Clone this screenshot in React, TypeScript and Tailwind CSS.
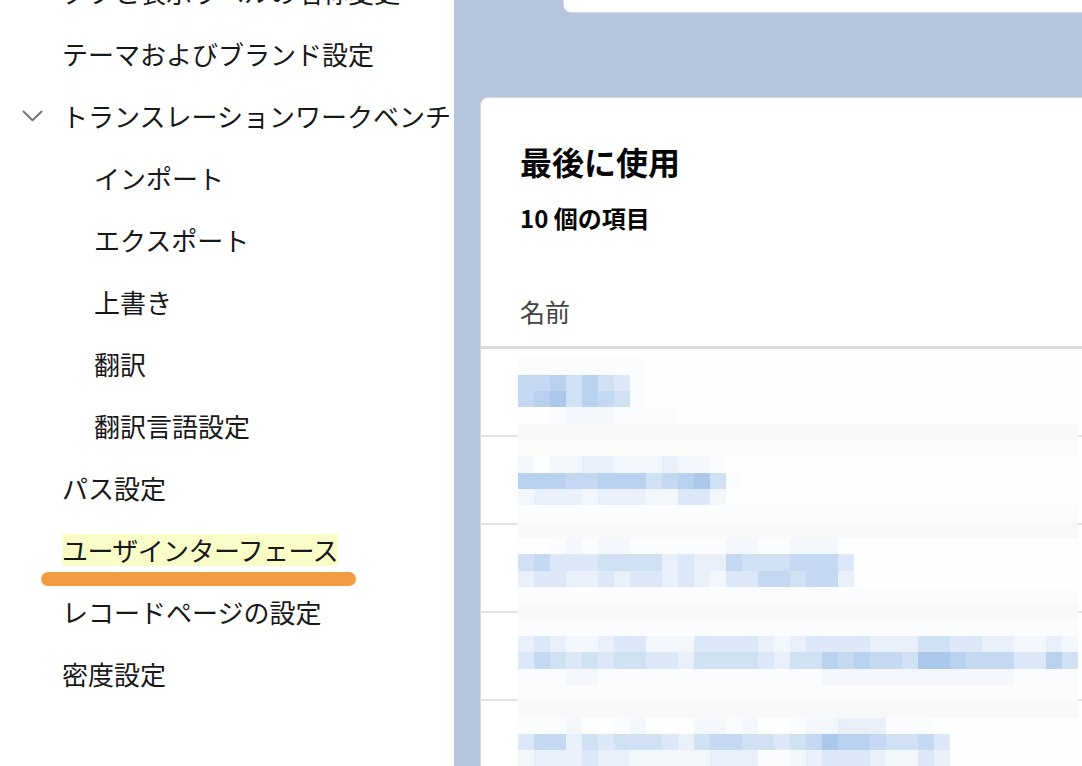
import React from 'react';

const navItems: { label: string; level: 0 | 1; expanded?: boolean; active?: boolean }[] = [
  { label: 'タブと表示ラベルの名称変更', level: 0 },
  { label: 'テーマおよびブランド設定', level: 0 },
  { label: 'トランスレーションワークベンチ', level: 0, expanded: true },
  { label: 'インポート', level: 1 },
  { label: 'エクスポート', level: 1 },
  { label: '上書き', level: 1 },
  { label: '翻訳', level: 1 },
  { label: '翻訳言語設定', level: 1 },
  { label: 'パス設定', level: 0 },
  { label: 'ユーザインターフェース', level: 0, active: true },
  { label: 'レコードページの設定', level: 0 },
  { label: '密度設定', level: 0 },
];

// pixelated (redacted) list of recent items, one string per 16px mosaic row
const mosaic = [
  'wwwwwwww...........................',
  'nnbmbmlw...........................',
  'nbdmbnmw...........................',
  '..wfffwwww.........................',
  'ggggggggggggggggggggggggggggggggggg',
  'ccccccccccccccccccccccccccccccccccc',
  'f.ffeefffeffw......................',
  'bbbnnbbbmnbdmw.....................',
  'feeefeeeffllf......................',
  'wwwwwwwwwwwwwwwwwwwwwwwwwwwwwwwwwww',
  'ggggggggggggggggggggggggggggggggggg',
  '..wfwffwwwwwwffwwfff...............',
  'mnlllmmmmeleenmmmnnnl..............',
  'elleelellelefllnnmnne..............',
  'wwwwwwwwwwwwwwwwwwwwwwwwwwwwwwwwwww',
  'ggggggggggggggggggggggggggggggggggg',
  'wwwwwwwwwwwwwwwwwwwwwwwwwwwwwwwwwww',
  'eleffellfffllllefelllleeemmlleeffef',
  'lnmlmlmmllemmmmlemmbnbnnmddbnnnllbm',
  'wwwffwwwwwwwwwwwwwwffffffffffffwwww',
  'ccccccccccccccccccccccccccccccccccc',
  'ggggggggggggggggggggggggggggggggggg',
  'wwwf..wf...ffwf..wffeeewww.........',
  'lnnemlmmmlemnnmmlmndbbnmmnl........',
  'feeeleefffffeeewwfellleffle........',
];

const cellColor: Record<string, string> = {
  '.': 'bg-[#fefefe]',
  w: 'bg-[#fbfcfe]',
  g: 'bg-[#f8f8f8]',
  c: 'bg-[#fbfbf9]',
  f: 'bg-[#f3f7fc]',
  e: 'bg-[#e9f0fa]',
  l: 'bg-[#dce8f7]',
  m: 'bg-[#d0e1f4]',
  n: 'bg-[#c4d9f1]',
  b: 'bg-[#b8d1ee]',
  d: 'bg-[#a9c8ec]',
};

const ChevronDown = () => (
  <svg width="21" height="12" viewBox="0 0 21 12" fill="none">
    <path d="M1.5 1.5 L10.5 10.2 L19.5 1.5" stroke="#747474" strokeWidth="2" strokeLinecap="round" strokeLinejoin="round" />
  </svg>
);

const Sidebar = () => (
  <div className="w-[454px] shrink-0 bg-white -mt-[39px]">
    {navItems.map((item, i) => (
      <div key={i} className="relative h-[62px] flex items-center">
        {item.expanded ? (
          <div className="flex items-center pl-[22px]">
            <ChevronDown />
            <span className="ml-[19px] text-[26px] leading-[32px] text-[#181818] whitespace-nowrap">{item.label}</span>
          </div>
        ) : (
          <div className={item.level === 1 ? 'pl-[94px]' : 'pl-[62px]'}>
            <span
              className={`text-[26px] leading-[32px] text-[#181818] whitespace-nowrap ${item.active ? 'bg-[#fafcc8] inline-block tracking-[-0.6px]' : ''}`}
            >
              {item.label}
            </span>
          </div>
        )}
        {item.active && (
          <div className="absolute left-[41px] top-[53px] h-[14px] w-[315px] rounded-full bg-[#f29c42] z-10" />
        )}
      </div>
    ))}
  </div>
);

const RecentCard = () => (
  <div className="mt-[84px] ml-[26px] -mr-[20px] bg-white border border-[#d9d9d9] rounded-tl-lg">
    <div className="pt-[43px] pl-[39px]">
      <h1 className="text-[32px] leading-[40px] font-bold text-[#080707]">最後に使用</h1>
      <p className="mt-[21px] text-[24px] leading-[32px] font-bold text-[#080707]">10 個の項目</p>
    </div>
    <div className="mt-[61px] pl-[39px] pb-[19px] border-b-[3px] border-[#dddbda]">
      <span className="text-[25px] leading-[32px] text-[#444444]">名前</span>
    </div>
    <div className="relative">
      {[0, 1, 2, 3, 4].map((r) => (
        <div key={r} className="h-[88px] border-b-[2px] border-[#e3e3e3]" />
      ))}
      <div className="absolute left-[37px] top-[9.4px] w-[560px]">
        {mosaic.map((row, r) => (
          <div key={r} className="flex h-[16.33px]">
            {row.split('').map((ch, c) => (
              <div key={c} className={`w-4 h-full ${cellColor[ch]}`} />
            ))}
          </div>
        ))}
      </div>
    </div>
  </div>
);

export default function App() {
  return (
    <div
      className="w-[1082px] h-[766px] flex overflow-hidden bg-white"
      style={{ fontFamily: '"Noto Sans CJK JP", "Noto Sans", sans-serif' }}
    >
      <Sidebar />
      <div className="flex-1 bg-[#b5c5de] overflow-hidden">
        <div className="ml-[109px] -mr-[20px] -mt-[20px] h-[33px] bg-white border border-[#d9d9d9] rounded-bl-lg" />
        <RecentCard />
      </div>
    </div>
  );
}
